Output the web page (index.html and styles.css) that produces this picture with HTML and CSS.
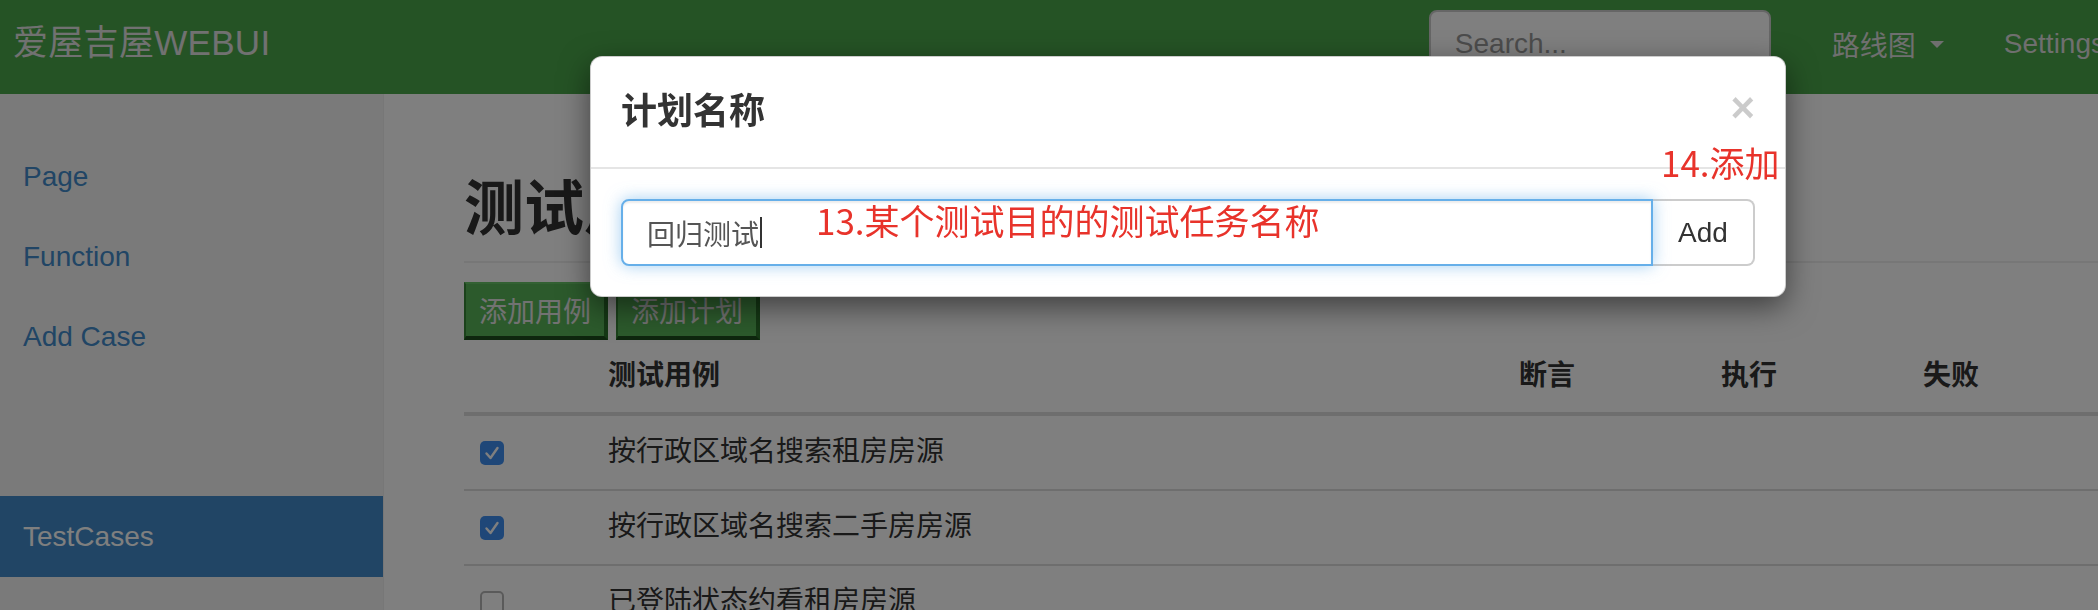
FILE: index.html
```html
<!DOCTYPE html>
<html lang="zh-CN">
<head>
<meta charset="utf-8">
<title>爱屋吉屋WEBUI</title>
<link rel="stylesheet" href="styles.css">
</head>
<body>
<div class="page">
  <nav class="navbar">
    <a class="brand">爱屋吉屋WEBUI</a>
    <div class="nav-right">
      <form class="navbar-form"><input class="search" type="text" placeholder="Search..."></form>
      <ul class="navbar-nav">
        <li><a class="nav-link">路线图<span class="caret"></span></a></li>
        <li><a class="nav-link">Settings</a></li>
      </ul>
    </div>
  </nav>
  <div class="layout">
    <aside class="sidebar">
      <ul class="nav-sidebar first">
        <li><a>Page</a></li>
        <li><a>Function</a></li>
        <li><a>Add Case</a></li>
      </ul>
      <ul class="nav-sidebar">
        <li class="active"><a>TestCases</a></li>
      </ul>
    </aside>
    <main class="main">
      <h2 class="page-header">测试用例</h2>
      <div class="btn-row">
        <button class="btn-green" type="button">添加用例</button>
        <button class="btn-green" type="button">添加计划</button>
      </div>
      <table class="table">
        <colgroup>
          <col class="c-check"><col class="c-name"><col class="c-num"><col class="c-num"><col class="c-num"><col>
        </colgroup>
        <thead>
          <tr><th></th><th>测试用例</th><th>断言</th><th>执行</th><th>失败</th><th></th></tr>
        </thead>
        <tbody>
          <tr><td><span class="cb checked"><svg viewBox="0 0 24 24" width="24" height="24"><path d="M6.5 12.5 L10.5 17 L17.5 7" fill="none" stroke="#fff" stroke-width="2.4" stroke-linecap="round" stroke-linejoin="round"/></svg></span></td><td>按行政区域名搜索租房房源</td><td></td><td></td><td></td><td></td></tr>
          <tr><td><span class="cb checked"><svg viewBox="0 0 24 24" width="24" height="24"><path d="M6.5 12.5 L10.5 17 L17.5 7" fill="none" stroke="#fff" stroke-width="2.4" stroke-linecap="round" stroke-linejoin="round"/></svg></span></td><td>按行政区域名搜索二手房房源</td><td></td><td></td><td></td><td></td></tr>
          <tr><td><span class="cb"></span></td><td>已登陆状态约看租房房源</td><td></td><td></td><td></td><td></td></tr>
        </tbody>
      </table>
    </main>
  </div>
</div>
<div class="backdrop"></div>
<div class="modal">
  <div class="modal-header">
    <h4 class="modal-title">计划名称</h4>
    <span class="close">×</span>
  </div>
  <div class="modal-body">
    <div class="input-group">
      <div class="plan-input">回归测试<span class="text-caret"></span></div>
      <button class="btn-add" type="button">Add</button>
    </div>
  </div>
</div>
<div class="note note-13">13.某个测试目的的测试任务名称</div>
<div class="note note-14">14.添加</div>
</body>
</html>
```

FILE: styles.css
```css
* { box-sizing: border-box; }

html, body {
  margin: 0;
  padding: 0;
  height: 100%;
  overflow: hidden;
}

body {
  font-family: "Liberation Sans", "Noto Sans CJK SC", sans-serif;
  font-size: 28px;
  color: #333;
  background: #fff;
}

ul { list-style: none; margin: 0; padding: 0; }
a { text-decoration: none; cursor: pointer; }

.page {
  width: 2200px;
  height: 610px;
  display: flex;
  flex-direction: column;
}

/* ---------- navbar ---------- */
.navbar {
  height: 94px;
  flex: none;
  background: #4aa64a;
  display: flex;
  align-items: flex-start;
  padding: 0 65px 0 13px;
}

.brand {
  font-size: 35px;
  line-height: 86px;
  color: #e2e2e2;
  letter-spacing: 0.3px;
}

.nav-right {
  margin-left: auto;
  display: flex;
  align-items: flex-start;
}

.navbar-form {
  margin: 10px 0 0;
  padding: 0 31px 0 30px;
}

.search {
  display: block;
  width: 342px;
  height: 68px;
  border: 2px solid #ccc;
  border-radius: 8px;
  background: #fff;
  padding: 0 24px;
  font-family: "Liberation Sans", sans-serif;
  font-size: 28px;
  color: #555;
  outline: none;
}
.search::placeholder { color: #999; }

.navbar-nav { display: flex; }

.nav-link {
  display: flex;
  align-items: center;
  height: 88px;
  padding: 0 30px;
  color: #dedede;
  font-size: 28px;
}

.caret {
  display: inline-block;
  width: 0;
  height: 0;
  margin-left: 14px;
  border-top: 7px solid #dedede;
  border-left: 7px solid transparent;
  border-right: 7px solid transparent;
}

/* ---------- layout ---------- */
.layout {
  flex: 1;
  display: flex;
}

.sidebar {
  width: 384px;
  flex: none;
  background: #f5f5f5;
  border-right: 1px solid #eee;
  padding-top: 43px;
}

.nav-sidebar li a {
  display: block;
  padding: 0 23px;
  line-height: 80px;
  font-size: 28px;
  color: #428bca;
}

.nav-sidebar.first { margin-bottom: 119px; }

.nav-sidebar li.active a {
  line-height: 81px;
  background: #428bca;
  color: #fff;
}

.main {
  flex: 1;
  padding: 83px 0 0 80px;
}

.page-header {
  margin: 0 0 19px;
  padding-bottom: 18px;
  border-bottom: 2px solid #eee;
  font-size: 60px;
  line-height: 66px;
  font-weight: 700;
  color: #333;
}

.btn-row {
  display: flex;
  gap: 8px;
  height: 58px;
}

.btn-green {
  height: 58px;
  padding: 0 13px;
  background: #58b458;
  color: #e4e4e4;
  font-family: "Noto Sans CJK SC", sans-serif;
  font-size: 28px;
  line-height: 1;
  border-style: solid;
  border-width: 2px 4px 4px 2px;
  border-color: #66c266 #2a702a #1c4c1c #378437;
  border-radius: 0;
}

.table {
  width: 100%;
  border-collapse: collapse;
  table-layout: fixed;
}

.c-check { width: 128px; }
.c-name { width: 911px; }
.c-num { width: 202px; }

.table th,
.table td {
  padding: 16px 16px;
  line-height: 40px;
  font-size: 28px;
  text-align: left;
  vertical-align: middle;
  color: #333;
}

.table th {
  font-weight: 700;
  border-bottom: 4px solid #ddd;
}

.table td {
  padding-bottom: 17px;
  border-bottom: 2px solid #ddd;
}

.cb {
  display: block;
  width: 24px;
  height: 24px;
  margin-top: 2px;
  border-radius: 5px;
  background: #fff;
  border: 2px solid #b5b5b5;
}

.cb.checked {
  background: #3f8ff0;
  border: none;
}

.cb svg { display: block; }

/* ---------- modal ---------- */
.backdrop {
  position: fixed;
  inset: 0;
  background: rgba(0, 0, 0, 0.5);
  z-index: 1040;
}

.modal {
  position: absolute;
  left: 590px;
  top: 56px;
  width: 1196px;
  background: #fff;
  border: 1px solid rgba(0, 0, 0, 0.2);
  border-radius: 12px;
  box-shadow: 0 10px 30px rgba(0, 0, 0, 0.5);
  z-index: 1050;
}

.modal-header {
  display: flex;
  justify-content: space-between;
  align-items: flex-start;
  padding: 29px 30px;
  border-bottom: 2px solid #e5e5e5;
}

.modal-title {
  margin: 0;
  font-size: 36px;
  line-height: 52px;
  font-weight: 700;
  color: #333;
}

.close {
  font-size: 42px;
  font-weight: 700;
  line-height: 42px;
  margin-top: 1px;
  color: #000;
  opacity: 0.2;
}

.modal-body { padding: 30px; }

.input-group {
  display: flex;
  height: 67px;
}

.plan-input {
  position: relative;
  z-index: 2;
  flex: 1;
  display: flex;
  align-items: center;
  padding: 0 24px;
  border: 2px solid #66afe9;
  border-radius: 8px 0 0 8px;
  box-shadow: inset 0 2px 2px rgba(0, 0, 0, 0.075), 0 0 16px rgba(102, 175, 233, 0.6);
  font-size: 28px;
  color: #555;
  background: #fff;
}

.text-caret {
  display: inline-block;
  width: 2px;
  height: 31px;
  margin-left: 1px;
  background: #333;
}

.btn-add {
  width: 102px;
  background: #fff;
  border: 2px solid #ccc;
  border-left: none;
  border-radius: 0 8px 8px 0;
  font-family: "Liberation Sans", sans-serif;
  font-size: 28px;
  color: #333;
  padding: 0;
}

/* ---------- annotations ---------- */
.note {
  position: absolute;
  z-index: 1060;
  font-family: "Noto Sans CJK SC", sans-serif;
  font-size: 35px;
  line-height: 1;
  color: #e8332b;
  white-space: nowrap;
}

.note-13 { left: 816px; top: 202px; }
.note-14 { left: 1661px; top: 144px; }
```
